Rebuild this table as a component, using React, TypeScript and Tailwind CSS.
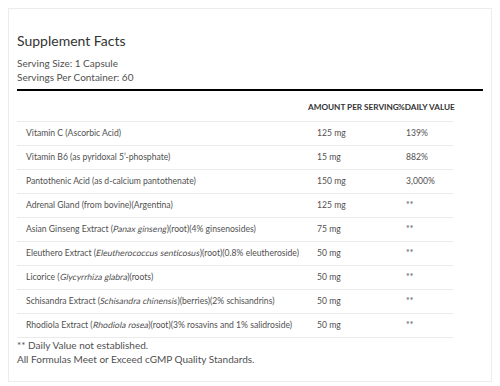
import React from 'react';

type Row = { name: React.ReactNode; amount: string; dv: string };

const It = ({ children }: { children: React.ReactNode }) => (
  <span className="inline-block -skew-x-12">{children}</span>
);

const rows: Row[] = [
  { name: 'Vitamin C (Ascorbic Acid)', amount: '125 mg', dv: '139%' },
  { name: 'Vitamin B6 (as pyridoxal 5\u2019-phosphate)', amount: '15 mg', dv: '882%' },
  { name: 'Pantothenic Acid (as d-calcium pantothenate)', amount: '150 mg', dv: '3,000%' },
  { name: 'Adrenal Gland (from bovine)(Argentina)', amount: '125 mg', dv: '**' },
  {
    name: (
      <>
        Asian Ginseng Extract (<It>Panax ginseng</It>)(root)(4% ginsenosides)
      </>
    ),
    amount: '75 mg',
    dv: '**',
  },
  {
    name: (
      <>
        Eleuthero Extract (<It>Eleutherococcus senticosus</It>)(root)(0.8% eleutheroside)
      </>
    ),
    amount: '50 mg',
    dv: '**',
  },
  {
    name: (
      <>
        Licorice (<It>Glycyrrhiza glabra</It>)(roots)
      </>
    ),
    amount: '50 mg',
    dv: '**',
  },
  {
    name: (
      <>
        Schisandra Extract (<It>Schisandra chinensis</It>)(berries)(2% schisandrins)
      </>
    ),
    amount: '50 mg',
    dv: '**',
  },
  {
    name: (
      <>
        Rhodiola Extract (<It>Rhodiola rosea</It>)(root)(3% rosavins and 1% salidroside)
      </>
    ),
    amount: '50 mg',
    dv: '**',
  },
];

export default function App() {
  return (
    <div className="w-[500px] h-[386px] bg-white p-2 font-['Lato',sans-serif] text-[#505050]">
      <div className="h-[374px] border border-[#ececec] px-2 pt-[23px]">
        <h2 className="text-[14px] leading-[18px] text-[#333]">Supplement Facts</h2>
        <div className="mt-[6px] text-[10px] leading-[14px]">
          <p>Serving Size: 1 Capsule</p>
          <p>Servings Per Container: 60</p>
        </div>
        <div className="mt-[5px] h-[2px] bg-black" />

        <table className="w-[436px] table-fixed border-collapse text-left">
          <colgroup>
            <col className="w-[291px]" />
            <col className="w-[90px]" />
            <col className="w-[55px]" />
          </colgroup>
          <thead>
            <tr className="h-[30px]">
              <th className="p-0" />
              <th className="p-0 pt-[3px] text-[8.2px] font-bold uppercase text-[#333] whitespace-nowrap">
                Amount per serving
              </th>
              <th className="p-0 pt-[3px] text-[8.2px] font-bold uppercase text-[#333] whitespace-nowrap">
                %Daily Value
              </th>
            </tr>
          </thead>
          <tbody>
            {rows.map((r, i) => (
              <tr key={i} className="h-[24px] border-t border-[#eaeaea] last:border-b">
                <td className="p-0 pl-[9px] text-[8.6px] whitespace-nowrap">{r.name}</td>
                <td className="p-0 pl-[9px] text-[8.6px]">{r.amount}</td>
                <td className="p-0 pl-[8px] text-[8.6px]">{r.dv}</td>
              </tr>
            ))}
          </tbody>
        </table>

        <div className="text-[10px] leading-[14px]">
          <p>** Daily Value not established.</p>
          <p>All Formulas Meet or Exceed cGMP Quality Standards.</p>
        </div>
      </div>
    </div>
  );
}
